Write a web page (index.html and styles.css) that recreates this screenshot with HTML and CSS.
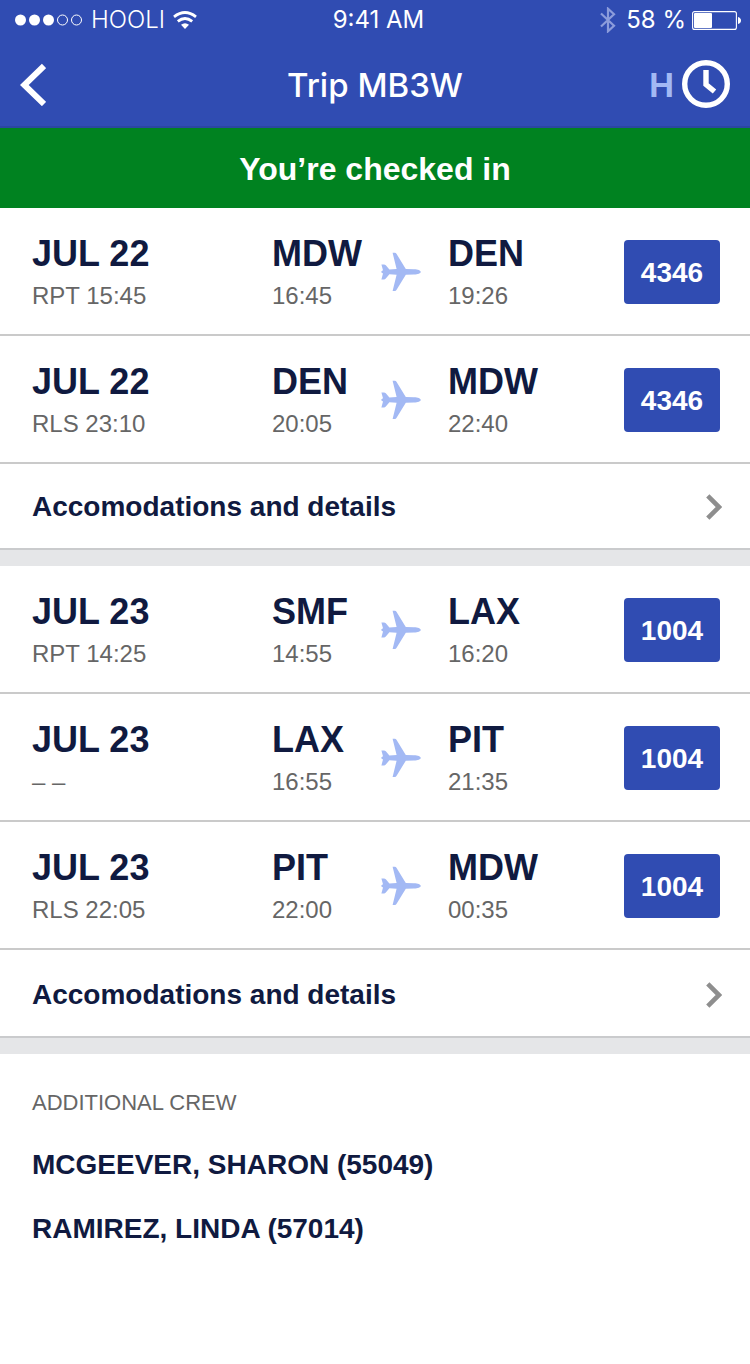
FILE: index.html
```html
<!DOCTYPE html>
<html lang="en">
<head>
<meta charset="utf-8">
<meta name="viewport" content="width=device-width, initial-scale=1">
<title>Trip MB3W</title>
<link rel="stylesheet" href="styles.css">
</head>
<body>
<svg class="sprite" aria-hidden="true">
  <symbol id="plane" viewBox="0 0 42 40">
    <path d="M12.6 .8H14.8Q15.9 .8 16.6 2L25.8 17.1L34 17.3C38 17.4 40.7 18.6 40.7 19.9S38 22.4 34 22.5L25.8 22.7L16.6 37.8Q15.9 39 14.8 39H12.6L16.6 22.7L9.4 22.3L5.8 26.5Q5 27.4 4 27.4H1.4L3 21.5L1.4 20.6V19.2L3 18.3L1.4 12.4H4Q5 12.4 5.8 13.3L9.4 17.5L16.6 17.1Z"/>
  </symbol>
  <symbol id="chevron" viewBox="0 0 16 26">
    <path d="M1.8 1.8L13 13L1.8 24.2" fill="none" stroke="currentColor" stroke-width="4.6"/>
  </symbol>
</svg>

<header class="header">
  <div class="status">
    <div class="status-left">
      <svg class="signal" viewBox="0 0 68 12" role="img" aria-label="Signal strength">
        <g fill="currentColor"><circle cx="5.5" cy="6" r="5.5"/><circle cx="19.5" cy="6" r="5.5"/><circle cx="33.5" cy="6" r="5.5"/></g>
        <g fill="none" stroke="currentColor"><circle cx="47.5" cy="6" r="5"/><circle cx="61.5" cy="6" r="5"/></g>
      </svg>
      <span class="carrier">HOOLI</span>
      <svg class="wifi" viewBox="0 0 24 18" role="img" aria-label="Wi-Fi">
        <g fill="none" stroke="currentColor" stroke-width="2.8"><path d="M1 5.8Q12 -2.8 23 5.8"/><path d="M4.8 10.3Q12 4.6 19.2 10.3"/></g>
        <path d="M8 13.8Q12 10.6 16 13.8L12 18Z" fill="currentColor"/>
      </svg>
    </div>
    <time class="clock-text">9:41 AM</time>
    <div class="status-right">
      <svg class="bluetooth" viewBox="0 0 16 26" role="img" aria-label="Bluetooth">
        <path d="M1 6.5L14 18.8L8 24.3V1.7L14 7.2L1 19.5" fill="none" stroke="currentColor" stroke-width="2.2"/>
      </svg>
      <span>58 %</span>
      <svg class="battery" viewBox="0 0 50 20" role="img" aria-label="Battery">
        <rect x=".6" y="1.6" width="43.8" height="17.8" rx="2" fill="none" stroke="currentColor" stroke-width="1.1"/>
        <rect x="2" y="3" width="18" height="15" rx="1" fill="currentColor"/>
        <path d="M46 7Q49 8 49 10.5T46 14Z" fill="currentColor"/>
      </svg>
    </div>
  </div>
  <nav class="nav">
    <button class="icon-button" type="button" aria-label="Back">
      <svg class="back" viewBox="0 -2 26 44"><path d="M24 2L4.3 21L24 40" fill="none" stroke="currentColor" stroke-width="6"/></svg>
    </button>
    <h1 class="title">Trip MB3W</h1>
    <div class="nav-actions">
      <span class="home-base">H</span>
      <button class="icon-button" type="button" aria-label="Time">
        <svg class="clock" viewBox="0 0 48 48"><g fill="none" stroke="currentColor"><circle cx="24" cy="24" r="21.3" stroke-width="5.4"/><path d="M24 10V24.5L32.5 31.5" stroke-width="5.4"/></g></svg>
      </button>
    </div>
  </nav>
</header>

<main>
  <p class="banner">You’re checked in</p>

  <section class="day">
    <article class="leg">
      <div><p class="main-text">JUL 22</p><p class="sub-text">RPT 15:45</p></div>
      <div><p class="main-text">MDW</p><p class="sub-text">16:45</p></div>
      <svg class="plane"><use href="#plane"/></svg>
      <div><p class="main-text">DEN</p><p class="sub-text">19:26</p></div>
      <button class="flight" type="button">4346</button>
    </article>
    <article class="leg">
      <div><p class="main-text">JUL 22</p><p class="sub-text">RLS 23:10</p></div>
      <div><p class="main-text">DEN</p><p class="sub-text">20:05</p></div>
      <svg class="plane"><use href="#plane"/></svg>
      <div><p class="main-text">MDW</p><p class="sub-text">22:40</p></div>
      <button class="flight" type="button">4346</button>
    </article>
    <a class="details" href="#">Accomodations and details <svg class="chevron"><use href="#chevron"/></svg></a>
  </section>

  <section class="day">
    <article class="leg">
      <div><p class="main-text">JUL 23</p><p class="sub-text">RPT 14:25</p></div>
      <div><p class="main-text">SMF</p><p class="sub-text">14:55</p></div>
      <svg class="plane"><use href="#plane"/></svg>
      <div><p class="main-text">LAX</p><p class="sub-text">16:20</p></div>
      <button class="flight" type="button">1004</button>
    </article>
    <article class="leg">
      <div><p class="main-text">JUL 23</p><p class="sub-text">– –</p></div>
      <div><p class="main-text">LAX</p><p class="sub-text">16:55</p></div>
      <svg class="plane"><use href="#plane"/></svg>
      <div><p class="main-text">PIT</p><p class="sub-text">21:35</p></div>
      <button class="flight" type="button">1004</button>
    </article>
    <article class="leg">
      <div><p class="main-text">JUL 23</p><p class="sub-text">RLS 22:05</p></div>
      <div><p class="main-text">PIT</p><p class="sub-text">22:00</p></div>
      <svg class="plane"><use href="#plane"/></svg>
      <div><p class="main-text">MDW</p><p class="sub-text">00:35</p></div>
      <button class="flight" type="button">1004</button>
    </article>
    <a class="details details-tall" href="#">Accomodations and details <svg class="chevron"><use href="#chevron"/></svg></a>
  </section>

  <section class="crew">
    <h2 class="crew-heading">ADDITIONAL CREW</h2>
    <ul class="crew-list">
      <li>MCGEEVER, SHARON (55049)</li>
      <li>RAMIREZ, LINDA (57014)</li>
    </ul>
  </section>
</main>
</body>
</html>
```

FILE: styles.css
```css
* {
  box-sizing: border-box;
}

body {
  margin: 0;
  background: #fff;
  color: #101a40;
  font-family: "Liberation Sans", Arial, sans-serif;
}

p, h1, h2, ul {
  margin: 0;
  padding: 0;
}

button {
  border: 0;
  padding: 0;
  font: inherit;
  cursor: pointer;
}

svg {
  display: block;
  flex: none;
}

.sprite {
  position: absolute;
  width: 0;
  height: 0;
}

/* Header */
.header {
  background: #304cb2;
  border-bottom: 2px solid #2b479f;
  color: #fff;
  font-family: Inter, sans-serif;
}

.status {
  display: grid;
  grid-template-columns: 1fr auto 1fr;
  align-items: center;
  height: 40px;
  padding: 0 8px 0 15px;
  font-size: 24px;
  line-height: 40px;
}

.status-left,
.status-right {
  display: flex;
  align-items: center;
  gap: 8px;
}

.status-right {
  justify-content: flex-end;
  gap: 6px;
}

.carrier {
  font-weight: 300;
}

.signal { width: 68px; height: 12px; }
.wifi { width: 24px; height: 18px; }
.battery { width: 50px; height: 20px; }

.bluetooth {
  width: 16px;
  height: 26px;
  margin-right: 4px;
  color: #8c9cdb;
}

.nav {
  display: grid;
  grid-template-columns: 1fr auto 1fr;
  align-items: center;
  height: 86px;
  padding: 2px 20px 0;
}

.icon-button {
  justify-self: start;
  background: none;
  color: inherit;
}

.back { width: 26px; height: 44px; }
.clock { width: 48px; height: 48px; }

.title {
  padding-top: 2px;
  font-size: 33px;
  font-weight: 500;
  line-height: 40px;
}

.nav-actions {
  display: flex;
  align-items: center;
  justify-content: flex-end;
  gap: 8px;
}

.home-base {
  padding-top: 2px;
  color: #a3b9f4;
  font-size: 33px;
  font-weight: 700;
  line-height: 40px;
}

.banner {
  padding: 21px 20px 19px;
  background: #008220;
  color: #fff;
  font-size: 32px;
  font-weight: 700;
  line-height: 40px;
  text-align: center;
}

/* Trip days */
.day {
  border-bottom: 16px solid #e5e6e8;
}

.leg {
  display: grid;
  grid-template-columns: 240fr 108fr 68fr 176fr 96px;
  align-items: center;
  padding: 22px 30px 20px 32px;
  border-bottom: 2px solid #cacaca;
}

.main-text {
  font-size: 36px;
  font-weight: 700;
  line-height: 48px;
}

.sub-text {
  color: #666;
  font-size: 24px;
  line-height: 36px;
}

.plane {
  width: 42px;
  height: 40px;
  fill: #a3b9f4;
}

.flight {
  height: 64px;
  padding-top: 2px;
  border-radius: 4px;
  background: #304cb2;
  color: #fff;
  font-size: 28px;
  font-weight: 700;
}

.details {
  display: flex;
  align-items: center;
  justify-content: space-between;
  min-height: 86px;
  padding: 2px 28px 0 32px;
  border-bottom: 2px solid #cacbcd;
  color: inherit;
  font-size: 28px;
  font-weight: 700;
  text-decoration: none;
}

.details-tall {
  min-height: 88px;
  padding-top: 4px;
}

.chevron {
  width: 16px;
  height: 26px;
  color: #8e8e8e;
}

/* Crew */
.crew {
  padding: 19px 32px;
}

.crew-heading {
  color: #666;
  font-size: 22px;
  font-weight: 400;
  line-height: 60px;
}

.crew-list {
  list-style: none;
  font-size: 28px;
  font-weight: 700;
  line-height: 64px;
}
```
